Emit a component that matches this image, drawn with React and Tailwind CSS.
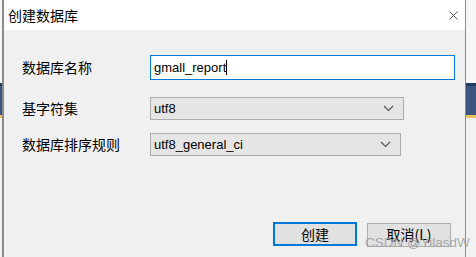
import { X } from "lucide-react";

const cjk = { fontFamily: '"Noto Sans CJK SC", "Noto Sans", sans-serif' };
const latin = { fontFamily: '"Liberation Sans", "Noto Sans CJK SC", sans-serif' };

const Chevron = () => (
  <svg width="11" height="7" viewBox="0 0 11 7" className="mr-[9px]">
    <path d="M1 1 L5.5 5.5 L10 1" fill="none" stroke="#555" strokeWidth="1.2" />
  </svg>
);

const BgStrip = ({ width }) => (
  <div className={`flex flex-col shrink-0 ${width}`}>
    <div className="h-[83px] bg-[#f7f7f7]" />
    <div className="h-[3px] bg-[#223a5e]" />
    <div className="h-[29px] bg-[#3a5781]" />
    <div className="h-[3px] bg-[#e8c35a]" />
    <div className="flex-1 bg-[#f2f2f2]" />
  </div>
);

const Row = ({ label, children, className }) => (
  <div className={`flex items-center ${className}`}>
    <div className="w-[128px] text-[14px] text-black" style={cjk}>
      {label}
    </div>
    {children}
  </div>
);

const App = () => {
  return (
    <div className="flex w-[476px] h-[257px] overflow-hidden bg-white">
      <BgStrip width="w-[2px]" />

      {/* dialog */}
      <div className="flex flex-col w-[464px] border-l-2 border-r border-[#8a8a8a] bg-[#f0f0f0]">
        <div className="flex items-center justify-between h-[30px] bg-white pl-[4px] pr-[4px]">
          <span className="text-[14px] text-black" style={cjk}>
            创建数据库
          </span>
          <X className="w-[15px] h-[15px] text-[#222]" strokeWidth={1.2} />
        </div>

        <div className="flex flex-col pl-[18px] pt-[25px]">
          <Row label="数据库名称">
            <div className="flex items-center w-[305px] h-[25px] bg-white border border-[#0078d7] pl-[3px]">
              <span className="text-[13px] text-black" style={latin}>
                gmall_report
              </span>
              <span className="w-px h-[15px] bg-black" />
            </div>
          </Row>

          <Row label="基字符集" className="mt-[17px]">
            <div className="flex items-center justify-between w-[254px] h-[23px] bg-[#e5e5e5] border border-[#adadad] pl-[3px]">
              <span className="text-[13px] text-black" style={latin}>
                utf8
              </span>
              <Chevron />
            </div>
          </Row>

          <Row label="数据库排序规则" className="mt-[13px]">
            <div className="flex items-center justify-between w-[251px] h-[23px] bg-[#e5e5e5] border border-[#adadad] pl-[3px]">
              <span className="text-[13px] text-black" style={latin}>
                utf8_general_ci
              </span>
              <Chevron />
            </div>
          </Row>

          <div className="flex justify-end gap-[10px] mt-[66px] pr-[14px]">
            <button className="w-[84px] h-[24px] bg-[#e1e1e1] border-2 border-[#0078d7] text-[14px] text-black" style={cjk}>
              创建
            </button>
            <div className="relative">
              <button className="w-[84px] h-[24px] bg-[#e1e1e1] border border-[#adadad] text-[14px] text-black" style={cjk}>
                取消(L)
              </button>
              <span
                className="absolute z-10 left-[-2px] top-[11px] text-[13.5px] text-[#a0a0a0]/90 whitespace-nowrap"
                style={latin}
              >
                CSDN @YilasdW
              </span>
            </div>
          </div>
        </div>
      </div>

      <BgStrip width="flex-1" />
    </div>
  );
};

export default App;
